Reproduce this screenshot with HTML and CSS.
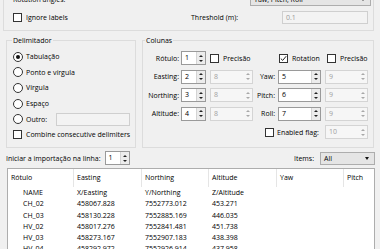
FILE: index.html
```html
<!DOCTYPE html>
<html>
<head>
<meta charset="utf-8">
<link rel="stylesheet" href="styles.css">
</head>
<body>
<div class="top-group">
  <div class="row-rot">
    <span>Rotation angles:</span>
    <div class="combo combo-rot"><span>Yaw, Pitch, Roll</span><i class="caret"></i></div>
  </div>
  <div class="row-ignore">
    <label class="check ignore"><span class="box"></span>Ignore labels</label>
    <span class="thr-label">Threshold (m):</span>
    <div class="line-edit disabled">0.1</div>
  </div>
</div>

<div class="groups">
  <div class="group delim">
    <span class="group-title">Delimitador</span>
    <div class="opts">
      <label class="radio"><span class="dot on"></span>Tabulação</label>
      <label class="radio"><span class="dot"></span>Ponto e vírgula</label>
      <label class="radio"><span class="dot"></span>Vírgula</label>
      <label class="radio"><span class="dot"></span>Espaço</label>
      <label class="radio outro"><span class="dot"></span>Outro:<span class="line-edit disabled other-edit"></span></label>
      <label class="check combine"><span class="box"></span>Combine consecutive delimiters</label>
    </div>
  </div>
  <div class="group cols">
    <span class="group-title">Colunas</span>
    <div class="grid">
      <span class="lbl">Rótulo:</span>
      <div class="spin small"><span class="val">1</span><span class="btns"><i class="up"></i><i class="down"></i></span></div>
      <label class="check"><span class="box"></span>Precisão</label>
      <span></span>
      <label class="check rot"><span class="box"><svg width="7" height="7" viewBox="0 0 7 7"><path d="M0.8 3.6 L2.7 5.4 L6.2 1.2" fill="none" stroke="#222" stroke-width="1"/></svg></span>Rotation</label>
      <label class="check prec2"><span class="box"></span>Precisão</label>

      <span class="lbl">Easting:</span>
      <div class="spin small"><span class="val">2</span><span class="btns"><i class="up"></i><i class="down"></i></span></div>
      <div class="spin dis"><span class="val">8</span><span class="btns"><i class="up"></i><i class="down"></i></span></div>
      <span class="lbl">Yaw:</span>
      <div class="spin"><span class="val">5</span><span class="btns"><i class="up"></i><i class="down"></i></span></div>
      <div class="spin dis"><span class="val">9</span><span class="btns"><i class="up"></i><i class="down"></i></span></div>

      <span class="lbl">Northing:</span>
      <div class="spin small"><span class="val">3</span><span class="btns"><i class="up"></i><i class="down"></i></span></div>
      <div class="spin dis"><span class="val">8</span><span class="btns"><i class="up"></i><i class="down"></i></span></div>
      <span class="lbl">Pitch:</span>
      <div class="spin"><span class="val">6</span><span class="btns"><i class="up"></i><i class="down"></i></span></div>
      <div class="spin dis"><span class="val">9</span><span class="btns"><i class="up"></i><i class="down"></i></span></div>

      <span class="lbl">Altitude:</span>
      <div class="spin small"><span class="val">4</span><span class="btns"><i class="up"></i><i class="down"></i></span></div>
      <div class="spin dis"><span class="val">8</span><span class="btns"><i class="up"></i><i class="down"></i></span></div>
      <span class="lbl">Roll:</span>
      <div class="spin"><span class="val">7</span><span class="btns"><i class="up"></i><i class="down"></i></span></div>
      <div class="spin dis"><span class="val">9</span><span class="btns"><i class="up"></i><i class="down"></i></span></div>

      <label class="check flag"><span class="box"></span>Enabled flag:</label>
      <div class="spin dis"><span class="val">10</span><span class="btns"><i class="up"></i><i class="down"></i></span></div>
    </div>
  </div>
</div>

<div class="import-row">
  <span>Iniciar a importação na linha:</span>
  <div class="spin small start"><span class="val">1</span><span class="btns"><i class="up"></i><i class="down"></i></span></div>
  <div class="items">
    <span>Items:</span>
    <div class="combo combo-items"><span>All</span><i class="caret"></i></div>
  </div>
</div>

<div class="table">
  <div class="thead">
    <span>Rótulo</span><span>Easting</span><span>Northing</span><span>Altitude</span><span>Yaw</span><span>Pitch</span>
  </div>
  <div class="trow"><span>NAME</span><span>X/Easting</span><span>Y/Northing</span><span>Z/Altitude</span><span></span><span></span></div>
  <div class="trow"><span>CH_02</span><span>458067.828</span><span>7552773.012</span><span>453.271</span><span></span><span></span></div>
  <div class="trow"><span>CH_03</span><span>458130.228</span><span>7552885.169</span><span>446.035</span><span></span><span></span></div>
  <div class="trow"><span>HV_02</span><span>458017.276</span><span>7552841.481</span><span>451.738</span><span></span><span></span></div>
  <div class="trow"><span>HV_03</span><span>458273.167</span><span>7552907.183</span><span>438.398</span><span></span><span></span></div>
  <div class="trow"><span>HV_04</span><span>458292.972</span><span>7552926.914</span><span>437.958</span><span></span><span></span></div>
</div>
</body>
</html>
```

FILE: styles.css
```css
* { box-sizing: border-box; }
html, body { margin: 0; padding: 0; }
body {
  width: 380px;
  height: 249px;
  overflow: hidden;
  background: #f0f0f0;
  font-family: "Open Sans", "Noto Sans", sans-serif;
  font-size: 7px;
  line-height: 9px;
  color: #000;
}

/* top group */
.top-group {
  margin: -20px 6px 0 3px;
  border: 1px solid #dcdcdc;
  padding: 11px 2px 6px 9px;
  display: flex;
  flex-direction: column;
  gap: 5px;
}
.row-rot {
  display: flex;
  justify-content: space-between;
  align-items: center;
  height: 14px;
}
.combo {
  display: flex;
  align-items: center;
  justify-content: space-between;
  background: #e5e5e5;
  border: 1px solid #adadad;
  padding: 0 5px 0 3px;
}
.combo-rot { width: 121px; height: 14px; }
.caret {
  width: 0;
  height: 0;
  border-left: 2.5px solid transparent;
  border-right: 2.5px solid transparent;
  border-top: 3px solid #111;
}
.row-ignore {
  display: flex;
  align-items: center;
  height: 13px;
}
.ignore { width: 178px; }
.thr-label { width: 91px; }
.line-edit {
  display: block;
  height: 13px;
  border: 1px solid #cfcfcf;
  background: #f3f3f3;
  padding-left: 3px;
  line-height: 11px;
}
.line-edit.disabled { color: #9a9a9a; }
.row-ignore .line-edit { width: 86px; }

/* checks & radios */
.check, .radio {
  display: flex;
  align-items: center;
  gap: 4px;
  white-space: nowrap;
}
.box {
  width: 9px;
  height: 9px;
  flex: 0 0 9px;
  border: 1px solid #333;
  background: #fff;
  display: flex;
  align-items: center;
  justify-content: center;
}
.dot {
  width: 10px;
  height: 10px;
  flex: 0 0 10px;
  border: 1px solid #333;
  border-radius: 50%;
  background: #fff;
  display: flex;
  align-items: center;
  justify-content: center;
}
.dot.on::after {
  content: "";
  width: 4px;
  height: 4px;
  border-radius: 50%;
  background: #111;
}
.radio { gap: 3px; height: 15.6px; }

/* groups */
.groups {
  display: flex;
  gap: 6px;
  margin: 9px 0 0 6px;
}
.group {
  border: 1px solid #dcdcdc;
  height: 108px;
  display: flex;
  flex-direction: column;
}
.group-title {
  align-self: flex-start;
  margin: -5px 0 0 -1px;
  padding: 0 1px;
  height: 9px;
  background: #f0f0f0;
}
.delim { width: 130px; padding: 0 5px 0 6px; }
.cols { width: 232px; padding: 0 4px 0 3px; }
.opts {
  margin-top: 4px;
  display: flex;
  flex-direction: column;
}
.other-edit {
  width: 74px;
  margin-left: auto;
}
.combine { height: 14px; margin-top: 1px; }

/* columns grid */
.grid {
  margin-top: 6px;
  display: grid;
  grid-template-columns: 35px 29px 43px 25px 47px 43px;
  grid-auto-rows: 14px;
  row-gap: 4.5px;
  align-items: center;
}
.lbl { text-align: right; padding-right: 2px; white-space: nowrap; }
.grid > .lbl:nth-child(6n+4) { padding-right: 3px; }
.rot { margin-left: 1px; }
.prec2 { margin-left: 2px; }
.flag { grid-column: 4 / 6; margin-left: 12px; gap: 3px; }

/* spin boxes */
.spin {
  display: flex;
  width: 43px;
  height: 14px;
  border: 1px solid #9a9a9a;
  background: #fff;
}
.spin.small { width: 25px; }
.spin .val {
  flex: 1;
  padding-left: 3px;
  line-height: 12px;
}
.spin .btns {
  width: 9px;
  display: flex;
  flex-direction: column;
  background: #ececec;
  border-left: 1px solid #d4d4d4;
}
.spin .btns i {
  flex: 1;
  display: flex;
  align-items: center;
  justify-content: center;
}
.spin .btns i::after {
  content: "";
  width: 0;
  height: 0;
  border-left: 2px solid transparent;
  border-right: 2px solid transparent;
}
.spin .btns .up::after { border-bottom: 2px solid #222; margin-top: 1px; }
.spin .btns .down::after { border-top: 2px solid #222; margin-bottom: 1px; }
.spin.dis {
  border-color: #d4d4d4;
  background: #f6f6f6;
  color: #a0a0a0;
}
.spin.dis .btns { background: #f6f6f6; border-left-color: transparent; }
.spin.dis .btns .up::after { border-bottom-color: #a8a8a8; }
.spin.dis .btns .down::after { border-top-color: #a8a8a8; }

/* import row */
.import-row {
  display: flex;
  align-items: center;
  height: 14px;
  margin: 3px 5px 0 6px;
}
.start { margin-left: 4px; }
.items {
  margin-left: auto;
  display: flex;
  align-items: center;
  gap: 6px;
}
.combo-items { width: 55px; height: 13px; }

/* table */
.table {
  margin: 3px 5px 0 7px;
  border: 1px solid #adadad;
  background: #fff;
  height: 100px;
}
.thead, .trow {
  display: grid;
  grid-template-columns: 66px 68px 67px 68px 67px 1fr;
}
.thead { height: 18px; line-height: 18px; }
.thead span {
  padding-left: 3px;
  border-right: 1px solid #e5e5e5;
}
.thead span:last-child { border-right: none; }
.trow { height: 11.3px; line-height: 11.3px; }
.trow span { padding-left: 3px; white-space: nowrap; }
.trow span:first-child { padding-left: 15px; }
```
